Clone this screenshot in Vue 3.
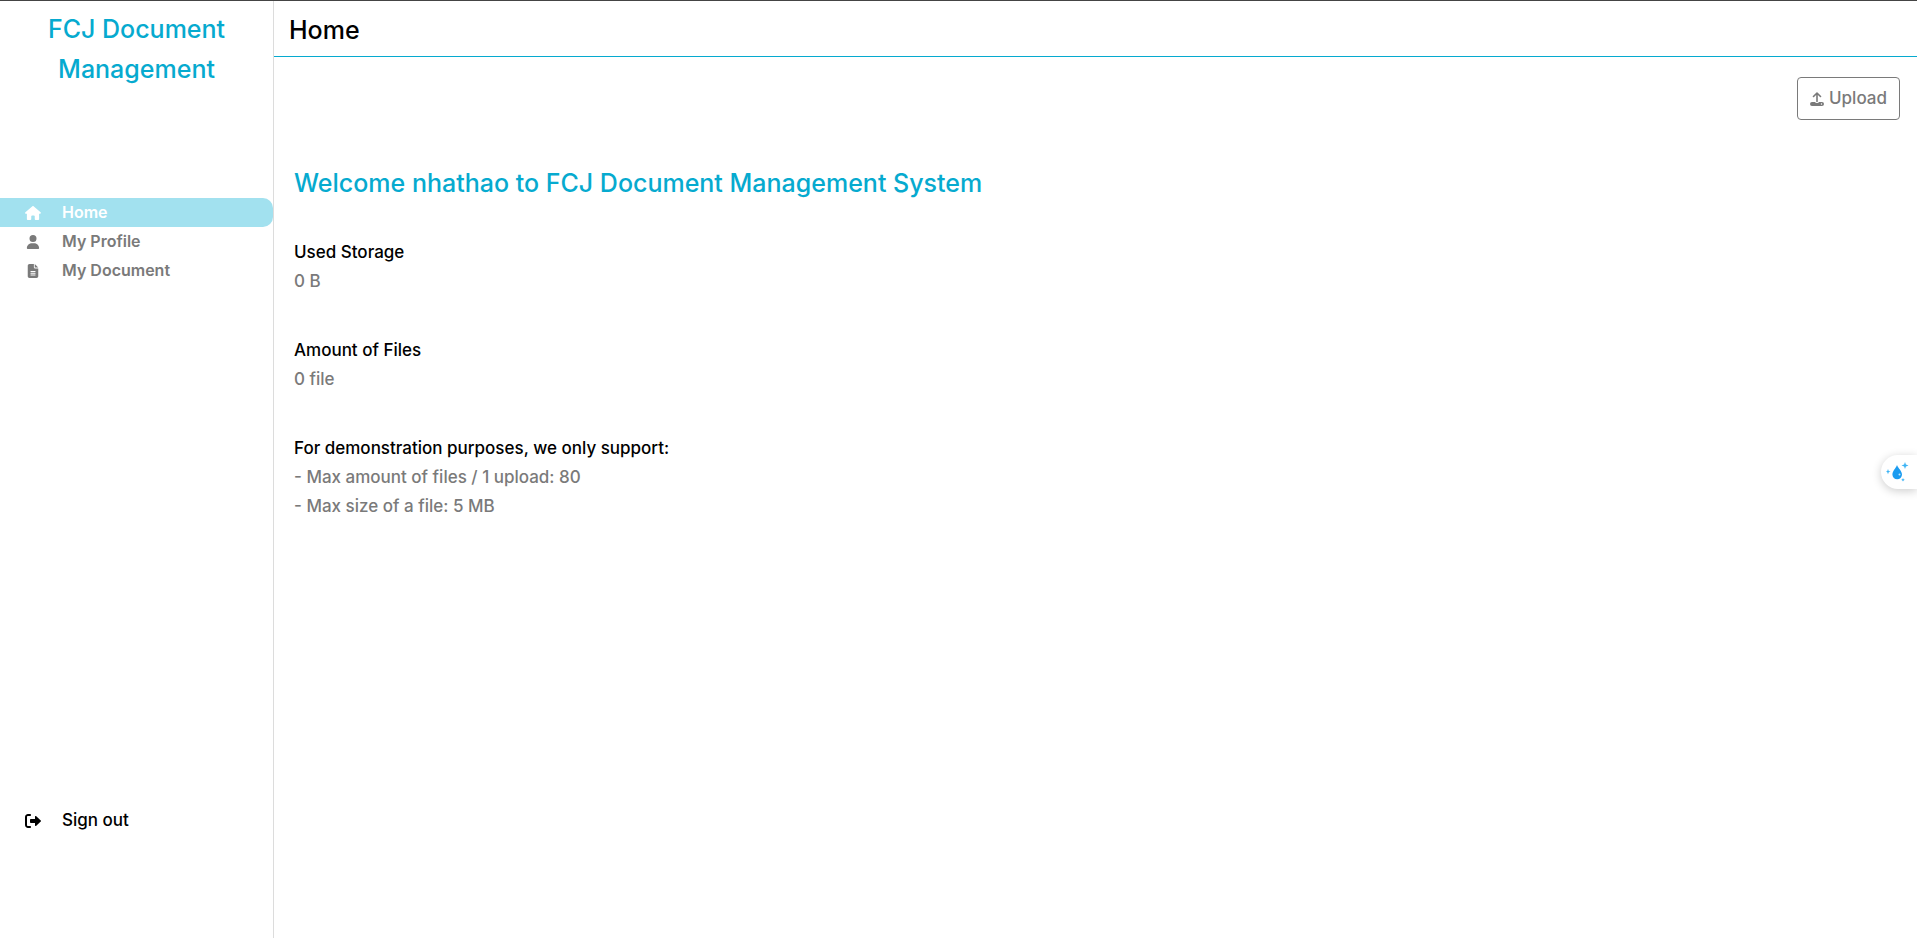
<script setup>
const nav = [
  { label: 'Home', icon: 'home', active: true },
  { label: 'My Profile', icon: 'user', active: false },
  { label: 'My Document', icon: 'file', active: false },
]
const icons = {
  home: { box: '0 0 576 512', d: 'M575.8 255.5c0 18-15 32.100-32 32.100h-32l.7 160.200c0 2.700-.2 5.400-.5 8.100V472c0 22.100-17.900 40-40 40H392c-22.100 0-40-17.900-40-40V376c0-17.700-14.300-32-32-32H256c-17.700 0-32 14.300-32 32v96c0 22.100-17.900 40-40 40H104c-22.100 0-40-17.900-40-40V287.600H32c-18 0-32-14-32-32.100 0-9 3-17 10-24L266.400 8c7-7 15-8 22-8s15 2 21 7L564.800 231.500c8 7 12 15 11 24z' },
  user: { box: '0 0 448 512', d: 'M224 256a128 128 0 1 0 0-256 128 128 0 1 0 0 256zm-45.700 48C79.800 304 0 383.800 0 482.300 0 498.700 13.300 512 29.700 512H418.300c16.400 0 29.700-13.300 29.700-29.700C448 383.800 368.200 304 269.700 304H178.300z' },
  file: { box: '0 0 384 512', d: 'M64 0C28.700 0 0 28.700 0 64V448c0 35.300 28.700 64 64 64H320c35.300 0 64-28.700 64-64V160H256c-17.700 0-32-14.300-32-32V0H64zM256 0V128H384L256 0zM112 256H272c8.800 0 16 7.200 16 16s-7.200 16-16 16H112c-8.800 0-16-7.200-16-16s7.200-16 16-16zm0 64H272c8.800 0 16 7.200 16 16s-7.200 16-16 16H112c-8.800 0-16-7.200-16-16s7.200-16 16-16zm0 64H272c8.800 0 16 7.200 16 16s-7.200 16-16 16H112c-8.800 0-16-7.200-16-16s7.200-16 16-16z' },
}
const sections = [
  { title: 'Used Storage', lines: ['0 B'] },
  { title: 'Amount of Files', lines: ['0 file'] },
  { title: 'For demonstration purposes, we only support:', lines: ['- Max amount of files / 1 upload: 80', '- Max size of a file: 5 MB'] },
]
</script>

<template>
  <div class="app">
    <aside class="sidebar">
      <h2 class="brand">FCJ Document Management</h2>
      <nav class="nav">
        <a v-for="n in nav" :key="n.label" href="#" class="link" :class="{ active: n.active }">
          <svg class="icon" :viewBox="icons[n.icon].box" aria-hidden="true"><path :d="icons[n.icon].d" /></svg>
          <span>{{ n.label }}</span>
        </a>
      </nav>
      <button type="button" class="link signout">
        <svg class="icon" viewBox="0 32 512 448" preserveAspectRatio="none" aria-hidden="true"><path d="M160 96c17.700 0 32-14.300 32-32s-14.300-32-32-32H96C43 32 0 75 0 128V384c0 53 43 96 96 96h64c17.700 0 32-14.300 32-32s-14.300-32-32-32H96c-17.700 0-32-14.300-32-32V128c0-17.700 14.300-32 32-32h64zM504.500 273.400c4.800-4.500 7.500-10.800 7.500-17.400s-2.700-12.900-7.500-17.400l-144-136c-7-6.600-17.200-8.400-26-4.600S320 110.400 320 120v72H192c-17.700 0-32 14.300-32 32v64c0 17.700 14.300 32 32 32H320v72c0 9.600 5.700 18.200 14.500 22s19 2 26-4.600l144-136z" /></svg>
        <span>Sign out</span>
      </button>
    </aside>
    <main class="main">
      <header class="header"><h1>Home</h1></header>
      <div class="toolbar">
        <button type="button" class="upload">
          <svg class="upload-icon" viewBox="0 0 14 14" aria-hidden="true">
            <path d="M7 9.500V1.500M3.500 4.500L7 1l3.500 3.500" fill="none" stroke="currentColor" stroke-width="1.600" stroke-linecap="round" stroke-linejoin="round" />
            <path fill-rule="evenodd" d="M2 10h3.500v1h3v-1H12a2 2 0 0 1 0 4H2a2 2 0 0 1 0-4zM11.500 11.300a.7.7 0 1 0 0 1.400.7.7 0 0 0 0-1.400z" />
          </svg>
          <span>Upload</span>
        </button>
      </div>
      <div class="content">
        <h2 class="welcome">Welcome nhathao to FCJ Document Management System</h2>
        <div class="sections">
          <section v-for="s in sections" :key="s.title">
            <h3>{{ s.title }}</h3>
            <p v-for="l in s.lines" :key="l">{{ l }}</p>
          </section>
        </div>
      </div>
    </main>
    <button type="button" class="assist" aria-label="Assistant">
      <svg viewBox="0 0 24 20" aria-hidden="true">
        <path fill="#1b9cf0" d="M11 3c1 3 5 6 5 9.500a4.800 4.800 0 0 1-9.600 0C6.400 9 10 6 11 3z" />
        <path fill="#3db4f5" d="M19 0l.9 2.600 2.600.9-2.600.9L19 7l-.9-2.600-2.600-.9 2.600-.9zM2 7l.7 1.900 1.800.7-1.800.7L2 12.200l-.7-1.900-1.300-.7 1.300-.7zM17 16l.6 1.200 1.200.6-1.200.6L17 19.600l-.6-1.200-1.200-.6 1.200-.6z" />
        <circle cx="13.500" cy="12.500" r="1" fill="#c5e8fd" />
      </svg>
    </button>
  </div>
</template>

<style>
body { margin: 0; background: #fff; }
</style>

<style scoped>
.app {
  display: flex;
  box-sizing: border-box;
  min-height: 100vh;
  border-top: 1px solid #444;
  padding-bottom: 4px;
  font-family: Inter, "Liberation Sans", sans-serif;
  font-size: 17px;
  font-weight: 450;
  line-height: 29px;
  color: #000;
}
h1, h2, h3, p { margin: 0; font-weight: inherit; }
h1, h2 { font-weight: 500; }
button { font: inherit; cursor: pointer; }
.sidebar {
  display: flex;
  flex-direction: column;
  flex: none;
  box-sizing: border-box;
  width: 274px;
  border-right: 1px solid #dcdcdc;
}
.brand {
  box-sizing: border-box;
  padding: 8px 32px 0;
  height: 197px;
  font-size: 25px;
  line-height: 40px;
  text-align: center;
  color: #06aacf;
}
.nav { font-size: 16px; font-weight: 600; }
.link {
  display: flex;
  align-items: center;
  gap: 21px;
  padding: 0 0 0 25px;
  color: #7a7a7a;
  text-decoration: none;
}
.icon { width: 16px; height: 14px; fill: currentColor; }
.active {
  background: #a2e1ef;
  color: #fff;
  border-radius: 0 10px 10px 0;
}
.signout {
  margin: auto 0 103px;
  border: 0;
  background: none;
  color: #000;
}
.main { flex: 1; min-width: 0; }
.header {
  padding: 9px 15px 6px;
  border-bottom: 1px solid #06aacf;
}
.header h1 { font-size: 25px; line-height: 40px; }
.toolbar {
  display: flex;
  justify-content: flex-end;
  padding: 20px 17px 0;
}
.upload {
  display: flex;
  align-items: center;
  gap: 5px;
  padding: 6px 12px;
  border: 1px solid #7a7a7a;
  border-radius: 4px;
  background: #fff;
  color: #7a7a7a;
}
.upload-icon { width: 14px; height: 14px; fill: currentColor; }
.content { padding: 43px 20px; }
.welcome { font-size: 25px; line-height: 40px; color: #06aacf; }
.sections {
  display: flex;
  flex-direction: column;
  gap: 40px;
  margin-top: 35px;
}
.sections h3 { font-size: 17px; }
.sections p { color: #7a7a7a; }
.assist {
  position: fixed;
  right: 0;
  top: 455px;
  width: 36px;
  height: 34px;
  padding: 0 0 0 5px;
  display: flex;
  align-items: center;
  border: 0;
  border-radius: 17px 0 0 17px;
  background: #fff;
  box-shadow: 0 2px 10px rgba(0, 0, 0, 0.2);
}
.assist svg { width: 24px; height: 20px; }
</style>
